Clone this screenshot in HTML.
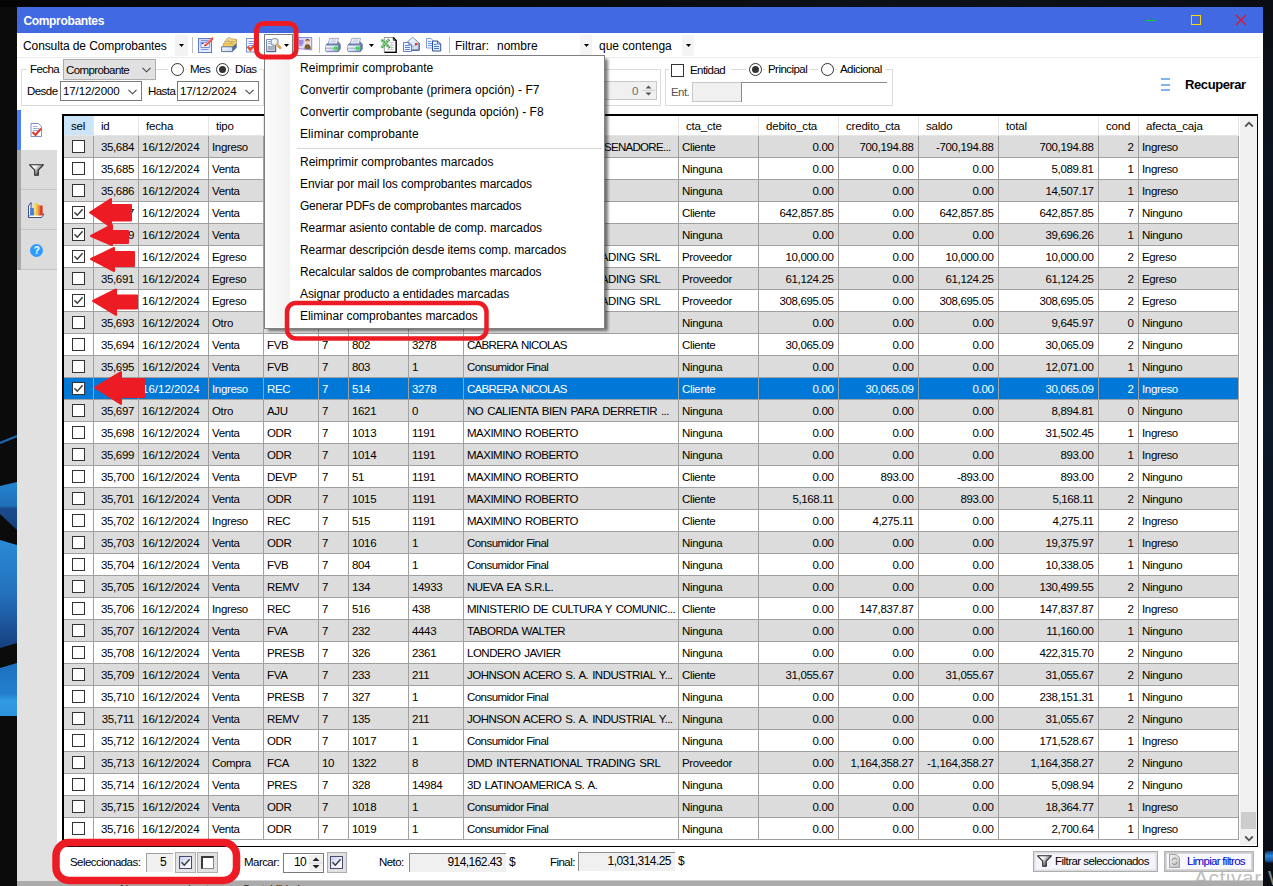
<!DOCTYPE html>
<html lang="es"><head><meta charset="utf-8"><title>Comprobantes</title>
<style>
*{box-sizing:border-box;margin:0;padding:0}
html,body{width:1273px;height:886px;overflow:hidden;background:#0b0b0c}
body{position:relative;font-family:"Liberation Sans",sans-serif;font-size:11.5px;letter-spacing:-.35px;color:#000}
.abs,.abs>*{position:absolute}
.a{position:absolute}
.t{position:absolute;white-space:nowrap;line-height:14px;height:14px;letter-spacing:-.55px}
.ui{font-family:"Liberation Sans",sans-serif;font-size:12px;white-space:nowrap;letter-spacing:0}
/* grid */
#grid{position:absolute;left:62px;top:114px;width:1196px;height:733px;background:#fff;border:solid #000;border-width:2px 1px 1px 2px}
.hc{position:absolute;top:116px;height:20px;background:#fff;border-right:1px solid #e5e5e5;border-bottom:1px solid #e5e5e5;line-height:21px;padding-left:7px;white-space:nowrap;overflow:hidden}
.r{position:absolute;left:64px;width:1175px;height:22px}
.r.g{background:#dcdcdc}
.r.s{background:#0078d7;color:#fff}
.c{position:absolute;top:0;height:22px;border-right:1px solid #a0a0a0;border-bottom:1px solid #a0a0a0;line-height:22px;padding:0 3px 0 3px;white-space:nowrap;overflow:hidden}
.c.r_{text-align:right;padding-right:4.500px}
.c.f{letter-spacing:0}
.c.id{padding-right:4px}
.c.u{letter-spacing:-.5px;word-spacing:1.2px}
.c.cf{letter-spacing:-.55px}
.c.u1{letter-spacing:-.36px;word-spacing:1.200px}
.c.u2{letter-spacing:-.68px;word-spacing:1.200px}
.hc{letter-spacing:-.2px}
.cb{position:absolute;left:8px;top:4px;width:13px;height:13px;border:1px solid #333;background:#fff}
.cb svg{position:absolute;left:0;top:0}
</style></head><body>

<div class="a" style="left:1263px;top:0;width:10px;height:886px;background:linear-gradient(180deg,#0b0d12 0%,#0c1420 18%,#0a0f18 30%,#0e1a2a 45%,#0a1422 60%,#0b1220 80%,#0a0c12 100%)"></div>
<div class="a" style="left:1265px;top:851px;width:8px;height:12px;background:linear-gradient(180deg,#143a6a,#2b86d6 40%,#1c5aa0 80%,#0c1830);border-radius:3px 0 0 3px"></div>
<div class="a" style="left:0;top:0;width:1273px;height:7px;background:linear-gradient(90deg,#050506 0%,#08090c 40%,#0c1018 70%,#0a0d14 100%)"></div>
<svg class="a" style="left:0;top:0" width="17" height="886" viewBox="0 0 17 886"><defs><linearGradient id="wl1" x1="0" y1="0" x2="0" y2="1"><stop offset="0" stop-color="#2485cf"/><stop offset=".5" stop-color="#1f6fb8"/><stop offset=".55" stop-color="#1b4b8c"/><stop offset="1" stop-color="#17407c"/></linearGradient><linearGradient id="wl2" x1="0" y1="0" x2="0" y2="1"><stop offset="0" stop-color="#2a8bd3"/><stop offset=".5" stop-color="#2371bd"/><stop offset="1" stop-color="#173f7f"/></linearGradient><linearGradient id="wl3" x1="0" y1="0" x2="0" y2="1"><stop offset="0" stop-color="#1d6fbd"/><stop offset=".6" stop-color="#2481cf"/><stop offset=".7" stop-color="#319be2"/><stop offset="1" stop-color="#2c92dc"/></linearGradient></defs><path d="M0 443 L17 436" stroke="#1c66ad" stroke-width="2.200"/><path d="M0 486 L17 482 V530 L0 514 Z" fill="url(#wl1)"/><path d="M0 540 L17 545 V643 L0 648 Z" fill="url(#wl2)"/><path d="M0 668 L17 663 V716 H0 Z" fill="url(#wl3)"/></svg>
<div class="a" style="left:17px;top:7px;width:1246px;height:874px;background:#fff"></div>
<div class="a" style="left:17px;top:880px;width:1246px;height:6px;background:#ababab;border-top:1px solid #cfcfcf"></div>
<div class="t" style="left:120px;top:882px;color:#222">Nuevo comprobante</div>
<div class="t" style="left:242px;top:882px;color:#222">Contabilidad</div>
<div class="a" style="left:17px;top:7px;width:1246px;height:26px;background:#4169e1"></div>
<div class="t" style="left:23.500px;top:14px;color:#fff;font-weight:bold;font-size:12px;letter-spacing:-.35px">Comprobantes</div>
<div class="a" style="left:1146px;top:20px;width:10px;height:1px;background:#00e000"></div>
<div class="a" style="left:1191px;top:15px;width:10px;height:10px;border:1px solid #ffd700"></div>
<svg class="a" style="left:1235px;top:14px" width="12" height="12" viewBox="0 0 12 12"><path d="M1 1 L11 11 M11 1 L1 11" stroke="#e8121c" stroke-width="1.2" fill="none"/></svg>
<div class="a" style="left:17px;top:57px;width:1244px;height:1px;background:#ececec"></div>
<div class="t ui" style="left:23px;top:39px;letter-spacing:-.1px">Consulta de Comprobantes</div>
<div class="a" style="left:175px;top:35px;width:13px;height:21px;background:#f3f3f3"></div>
<svg class="a" style="left:179px;top:44px" width="5" height="3" viewBox="0 0 5 3"><path d="M0 0 H5 L2.5 3 Z" fill="#000"/></svg>
<div class="a" style="left:192px;top:37px;width:1px;height:16px;background:#bdbdbd"></div>
<div class="a" style="left:319px;top:37px;width:1px;height:16px;background:#bdbdbd"></div>
<div class="a" style="left:449px;top:37px;width:1px;height:16px;background:#bdbdbd"></div>
<svg class="a" style="left:198px;top:37px" width="16" height="16" viewBox="0 0 16 16"><defs><linearGradient id="i1a" x1="0" y1="0" x2="0" y2="1"><stop offset="0" stop-color="#c9d8fb"/><stop offset="1" stop-color="#e8efff"/></linearGradient></defs><rect x="0.500" y="1.500" width="13" height="14" fill="url(#i1a)" stroke="#5f7dcb" stroke-width="1"/><path d="M3 3.500h7.500M3 12.500h7.500" stroke="#7a98de" stroke-width="1"/><rect x="3" y="5.300" width="8.300" height="5.200" fill="#fff" stroke="#6c8ada" stroke-width=".9"/><rect x="3.600" y="6" width="2" height="1.100" fill="#1a2cf0"/><path d="M6.200 9.300 L7 7.300 L13.300 0.800 L15.200 2.600 L8.600 8.800 Z" fill="#f0463c"/><path d="M7.600 7.600 L13.600 1.500" stroke="#ff9d92" stroke-width="1"/><path d="M13.300 0.800 L15.200 0.300 L15.200 2.600 Z" fill="#e23a18"/><path d="M6 9.600 L7 7.400 L8.400 8.800 Z" fill="#a61e16"/></svg>
<svg class="a" style="left:221px;top:37px" width="16" height="16" viewBox="0 0 16 16"><defs><linearGradient id="i2a" x1="0" y1="0" x2="1" y2="1"><stop offset="0" stop-color="#ffffff"/><stop offset="1" stop-color="#bcd3ee"/></linearGradient><linearGradient id="i2b" x1="0" y1="0" x2="0" y2="1"><stop offset="0" stop-color="#fbeea8"/><stop offset="1" stop-color="#f0c040"/></linearGradient></defs><path d="M2 9.600 L2.300 7 L6.200 1.300 L8.600 0.500 L10.200 1.800 L15.300 2.300 L15.700 6.300 L11.600 9.800 Z" fill="url(#i2b)" stroke="#a8895a" stroke-width=".7"/><path d="M2.300 7 H11.500 L15.300 2.800 M4.200 4.400 H12.700 M6.700 4.400 L8.800 1.800 M9 7 L11.400 4.400" stroke="#b79a62" stroke-width=".7" fill="none"/><path d="M2.600 7.400 H11.300 V9.600 H2.600 Z" fill="#f6cf58"/><path d="M11.600 9.800 L15.700 6.300 V10.700 L11.600 14.600 Z" fill="#4b6a8f"/><path d="M0.600 9.800 H11.600 V14.600 H0.600 Z" fill="url(#i2a)" stroke="#4d6a92" stroke-width=".9"/></svg>
<svg class="a" style="left:246px;top:37px" width="16" height="16" viewBox="0 0 16 16"><rect x="0.500" y="1.500" width="10.500" height="13.500" fill="#f4f8ff" stroke="#6f86c8" stroke-width=".9"/><path d="M2.500 4.500h6.500M2.500 6.500h6.500M2.500 8.500h6.500M2.500 10.500h6.500" stroke="#7da0ea" stroke-width="1"/><path d="M1.500 9.500 L4.300 13 L10.500 5.500" stroke="#e8502a" stroke-width="2.300" fill="none"/></svg>
<svg class="a" style="left:298px;top:36px" width="16" height="16" viewBox="0 0 16 16"><defs><linearGradient id="i5a" x1="0" y1="0" x2="1" y2="1"><stop offset="0" stop-color="#c9c9ff"/><stop offset="1" stop-color="#f2f2ff"/></linearGradient></defs><path d="M0 1.500 H13.700 V14 L0 12.500 Z" fill="url(#i5a)" stroke="#7f7fdc" stroke-width=".9"/><path d="M1 5h4.500M1 7h4.500M1.500 9h3" stroke="#5a48c0" stroke-width="1.100"/><path d="M6.500 12.800 Q6.300 8.300 9.500 8 Q12.800 8.300 12.700 13.300 Z" fill="#7a5a1e"/><circle cx="9.600" cy="5.500" r="2.300" fill="#f3c79a"/><path d="M7.300 5 Q7.600 2.600 9.800 2.800 Q12 3 11.900 5 Q10 3.800 7.300 5 Z" fill="#8a5a28"/><path d="M9.300 8.300 L9.900 8.300 L10.200 11.500 L9.500 12.300 L9 11.500 Z" fill="#2f7ad8"/></svg>
<svg class="a" style="left:324.5px;top:37px" width="16" height="16" viewBox="0 0 16 16"><defs><linearGradient id="p1" x1="0" y1="0" x2="1" y2="1"><stop offset="0" stop-color="#f6f9ff"/><stop offset=".55" stop-color="#d7e0f0"/><stop offset="1" stop-color="#8a9cc0"/></linearGradient></defs><path d="M1 8 L4 5 H13.500 L15.300 7.500 V12 L13.300 14.700 H1.500 L0.600 13.500 Z" fill="#6d82aa" stroke="#52668f" stroke-width=".7"/><path d="M4.800 1.300 L13.600 1.300 L12 6.700 L3.200 6.700 Z" fill="#f4f6ff" stroke="#8b97bd" stroke-width=".8"/><path d="M6 3h5.500M5.500 4.800h5.500" stroke="#b3bcd6" stroke-width=".9"/><path d="M0.800 8.600 H12.800 V14.300 H1.500 L0.800 13.300 Z" fill="url(#p1)"/><path d="M0.800 11.200 H12.800" stroke="#8fa0c4" stroke-width=".8"/><rect x="9" y="9.700" width="3.200" height="2.800" fill="#18cf2c"/><rect x="10" y="10.500" width="1.200" height="1.100" fill="#a6ff4a"/></svg>
<svg class="a" style="left:346.5px;top:37px" width="16" height="16" viewBox="0 0 16 16"><defs><linearGradient id="p2" x1="0" y1="0" x2="1" y2="1"><stop offset="0" stop-color="#f6f9ff"/><stop offset=".55" stop-color="#d7e0f0"/><stop offset="1" stop-color="#8a9cc0"/></linearGradient></defs><path d="M1 8 L4 5 H13.500 L15.300 7.500 V12 L13.300 14.700 H1.500 L0.600 13.500 Z" fill="#6d82aa" stroke="#52668f" stroke-width=".7"/><path d="M4.800 1.300 L13.600 1.300 L12 6.700 L3.200 6.700 Z" fill="#f4f6ff" stroke="#8b97bd" stroke-width=".8"/><path d="M6 3h5.500M5.500 4.800h5.500" stroke="#b3bcd6" stroke-width=".9"/><path d="M0.800 8.600 H12.800 V14.300 H1.500 L0.800 13.300 Z" fill="url(#p2)"/><path d="M0.800 11.200 H12.800" stroke="#8fa0c4" stroke-width=".8"/><rect x="9" y="9.700" width="3.200" height="2.800" fill="#18cf2c"/><rect x="10" y="10.500" width="1.200" height="1.100" fill="#a6ff4a"/></svg>
<svg class="a" style="left:369px;top:44px" width="5" height="3" viewBox="0 0 5 3"><path d="M0 0 H5 L2.500 3 Z" fill="#000"/></svg>
<svg class="a" style="left:379.5px;top:36px" width="17" height="17" viewBox="0 0 17 17"><defs><pattern id="xd" width="1.400" height="1.400" patternUnits="userSpaceOnUse"><rect width="1.400" height="1.400" fill="#0f8a14"/><rect width=".7" height=".7" fill="#d9f0d9"/><rect x=".7" y=".7" width=".7" height=".7" fill="#d9f0d9"/></pattern></defs><path d="M4.300 1.500 H13.300 L16 4.200 V16 H4.300 Z" fill="#fff" stroke="#8c8c8c" stroke-width=".9"/><path d="M13.300 1.500 L16.200 4.400 V16.300 H4.500" fill="none" stroke="#000" stroke-width="1.300"/><path d="M13.300 1.500 V4.300 H16" fill="none" stroke="#000" stroke-width=".8"/><path d="M9.500 6.500h4.500M9.500 9h4.500M9.500 11.500h4.500M11.800 6v8M7 13.500h7" stroke="#c4c4c4" stroke-width=".8"/><path d="M1.300 3.600 L9.800 12 M9.300 3.300 L1.300 11.700" stroke="url(#xd)" stroke-width="2.900"/></svg>
<svg class="a" style="left:403px;top:36px" width="17" height="17" viewBox="0 0 17 17"><defs><linearGradient id="m1" x1="0" y1="0" x2="1" y2="1"><stop offset="0" stop-color="#ffffff"/><stop offset="1" stop-color="#c4d4ee"/></linearGradient></defs><path d="M3.300 7 L9.700 1.200 L16 7 V14 H3.300 Z" fill="url(#m1)" stroke="#6f84ae" stroke-width=".9"/><path d="M3.300 7 L9.700 11 L16 7" fill="none" stroke="#8c9cc0" stroke-width=".7"/><path d="M16.200 7 V14.300 H8" stroke="#3f5686" stroke-width="1" fill="none"/><rect x="12" y="7" width="2.300" height="2.200" fill="#e5361e"/><path d="M0.500 6.500 H6 L8.500 9 V15.500 H0.500 Z" fill="#eef3ff" stroke="#5673b8" stroke-width=".9"/><path d="M6 6.500 V9 H8.500" fill="none" stroke="#3b5390" stroke-width=".8"/><path d="M2 9.500h4M2 11.500h5M2 13.500h5" stroke="#5b82d6" stroke-width="1"/></svg>
<svg class="a" style="left:426px;top:37px" width="16" height="16" viewBox="0 0 16 16"><path d="M0.500 1.500 H5 L7.500 4 V11 H0.500 Z" fill="#f0f5ff" stroke="#7d93c8" stroke-width=".9"/><path d="M2 4.500h3M2 6.500h4M2 8.500h4" stroke="#6d97e6" stroke-width="1"/><path d="M6.500 4 H11.500 L14.700 7 V14 H6.500 Z" fill="#eaf1ff" stroke="#2f4f9e" stroke-width="1"/><path d="M11.500 4 V7 H14.700" fill="none" stroke="#2f4f9e" stroke-width=".8"/><path d="M8 7.500h2.500M8 9.500h5M8 11.500h5" stroke="#3f74d8" stroke-width="1"/></svg>
<div class="t ui" style="left:455px;top:39px">Filtrar:</div>
<div class="t ui" style="left:497px;top:39px">nombre</div>
<div class="a" style="left:580px;top:35px;width:12px;height:21px;background:#f4f4f4"></div>
<svg class="a" style="left:584px;top:44px" width="5" height="3" viewBox="0 0 5 3"><path d="M0 0 H5 L2.5 3 Z" fill="#000"/></svg>
<div class="t ui" style="left:599px;top:39px">que contenga</div>
<div class="a" style="left:682px;top:35px;width:12px;height:21px;background:#f4f4f4"></div>
<svg class="a" style="left:686px;top:44px" width="5" height="3" viewBox="0 0 5 3"><path d="M0 0 H5 L2.5 3 Z" fill="#000"/></svg>
<div class="a" style="left:21px;top:69px;width:243px;height:37px;border:1px solid #dcdcdc"></div>
<div class="t" style="left:27px;top:62px;background:#fff;padding:0 3px">Fecha</div>
<div class="a" style="left:63px;top:59px;width:93px;height:21px;background:#e1e1e1;border:1px solid #adadad"></div>
<div class="t" style="left:66px;top:63px;letter-spacing:-.6px">Comprobante</div>
<svg class="a" style="left:142px;top:67px" width="9" height="6" viewBox="0 0 9 6"><path d="M0.5 0.8 L4.5 4.8 L8.5 0.8" stroke="#444" stroke-width="1.1" fill="none"/></svg>
<div class="a" style="left:168px;top:62px;width:17px;height:14px;background:#fff"></div>
<div class="a" style="left:171px;top:63px;width:13px;height:13px;border:1px solid #333;border-radius:50%;background:#fff"></div>
<div class="t" style="left:187px;top:62px;background:#fff;padding:0 3px">Mes</div>
<div class="a" style="left:213px;top:62px;width:17px;height:14px;background:#fff"></div>
<div class="a" style="left:216px;top:63px;width:13px;height:13px;border:1px solid #333;border-radius:50%;background:#fff"></div>
<div class="a" style="left:219px;top:66px;width:7px;height:7px;border-radius:50%;background:#333"></div>
<div class="t" style="left:232px;top:62px;background:#fff;padding:0 3px">Días</div>
<div class="t" style="left:27px;top:84px">Desde</div>
<div class="a" style="left:60px;top:81px;width:82px;height:20px;background:#fff;border:1px solid #7a7a7a"></div>
<div class="t" style="left:63px;top:84px;letter-spacing:-.1px">17/12/2000</div>
<svg class="a" style="left:128px;top:89px" width="9" height="6" viewBox="0 0 9 6"><path d="M0.5 0.8 L4.5 4.8 L8.5 0.8" stroke="#444" stroke-width="1.1" fill="none"/></svg>
<div class="t" style="left:148px;top:84px">Hasta</div>
<div class="a" style="left:177px;top:81px;width:82px;height:20px;background:#fff;border:1px solid #7a7a7a"></div>
<div class="t" style="left:180px;top:84px;letter-spacing:-.1px">17/12/2024</div>
<svg class="a" style="left:245px;top:89px" width="9" height="6" viewBox="0 0 9 6"><path d="M0.5 0.8 L4.5 4.8 L8.5 0.8" stroke="#444" stroke-width="1.1" fill="none"/></svg>
<div class="a" style="left:270px;top:69px;width:391px;height:37px;border:1px solid #dcdcdc"></div>
<div class="a" style="left:560px;top:81px;width:97px;height:19px;background:#f0f0f0;border:1px solid #c8c8c8"></div>
<div class="t" style="left:632px;top:84px;color:#6d6d6d">0</div>
<svg class="a" style="left:642px;top:83px" width="13" height="15" viewBox="0 0 13 15"><rect x="0" y="0" width="13" height="15" fill="#f0f0f0"/><path d="M3.5 5.5 L6.5 2.5 L9.5 5.5 Z M3.5 9.5 L6.5 12.5 L9.5 9.5 Z" fill="#555"/><path d="M0 7.5H13" stroke="#d0d0d0"/></svg>
<div class="a" style="left:665px;top:69px;width:228px;height:37px;border:1px solid #dcdcdc"></div>
<div class="a" style="left:669px;top:62px;width:62px;height:16px;background:#fff"></div>
<div class="a" style="left:671px;top:64px;width:13px;height:13px;border:1px solid #333;background:#fff"></div>
<div class="t" style="left:690px;top:63px">Entidad</div>
<div class="a" style="left:746px;top:62px;width:17px;height:14px;background:#fff"></div>
<div class="a" style="left:749px;top:63px;width:13px;height:13px;border:1px solid #333;border-radius:50%;background:#fff"></div>
<div class="a" style="left:752px;top:66px;width:7px;height:7px;border-radius:50%;background:#333"></div>
<div class="t" style="left:765px;top:62px;background:#fff;padding:0 3px">Principal</div>
<div class="a" style="left:818px;top:62px;width:17px;height:14px;background:#fff"></div>
<div class="a" style="left:821px;top:63px;width:13px;height:13px;border:1px solid #333;border-radius:50%;background:#fff"></div>
<div class="t" style="left:837px;top:62px;background:#fff;padding:0 3px">Adicional</div>
<div class="t" style="left:671px;top:85px;color:#555">Ent.</div>
<div class="a" style="left:692px;top:82px;width:50px;height:20px;background:#f0f0f0;border:1px solid #c6c6c6"></div>
<div class="a" style="left:741px;top:82px;width:146px;height:20px;border-top:1px solid #8a8a8a;border-left:1px solid #8a8a8a"></div>
<div class="a" style="left:1161px;top:78px;width:9px;height:2px;background:#7fb4f2"></div>
<div class="a" style="left:1161px;top:84px;width:9px;height:2px;background:#7fb4f2"></div>
<div class="a" style="left:1161px;top:89px;width:9px;height:2px;background:#7fb4f2"></div>
<div class="t" style="left:1185px;top:77px;font-weight:bold;font-size:13px;line-height:16px;height:16px;letter-spacing:-.4px">Recuperar</div>
<div class="a" style="left:17px;top:110px;width:40px;height:771px;background:#e1e1e1"></div>
<div class="a" style="left:17px;top:110px;width:40px;height:40px;background:#fff"></div>
<div class="a" style="left:17px;top:110px;width:4px;height:40px;background:#4a80fb"></div>
<div class="a" style="left:17px;top:150px;width:40px;height:120px;background:#dcdcdc"></div>
<div class="a" style="left:17px;top:150px;width:4px;height:120px;background:#a9a9a9"></div>
<div class="a" style="left:21px;top:189px;width:36px;height:1px;background:#c4c4c4"></div>
<div class="a" style="left:21px;top:229px;width:36px;height:1px;background:#c4c4c4"></div>
<div class="a" style="left:21px;top:269px;width:36px;height:1px;background:#c4c4c4"></div>
<svg class="a" style="left:30px;top:122px" width="13" height="16" viewBox="0 0 13 16"><path d="M1 1.500 H8.500 L11.500 4.500 V14.500 H1 Z" fill="#fff" stroke="#6f86c8" stroke-width=".9"/><path d="M3 4.500h4.500M3 6.500h6M3 8.500h6" stroke="#8fa6e0" stroke-width=".9"/><path d="M2.500 10 L5.500 13 L11 6.500" stroke="#e03a2a" stroke-width="2" fill="none"/></svg>
<svg class="a" style="left:29px;top:164px" width="15" height="12" viewBox="0 0 15 12"><defs><linearGradient id="fs" x1="0" y1="0" x2="1" y2=".6"><stop offset="0" stop-color="#fff"/><stop offset=".42" stop-color="#f4f4f4"/><stop offset=".7" stop-color="#8a8a8a"/><stop offset="1" stop-color="#222"/></linearGradient></defs><path d="M0.600 0.800 H14.400 L9.300 6.200 V11.300 H5.700 V6.200 Z" fill="url(#fs)" stroke="#2a2a2a" stroke-width="1.100" stroke-linejoin="round"/></svg>
<svg class="a" style="left:27px;top:201px" width="18" height="18" viewBox="0 0 18 18"><path d="M1.500 5 L4 1.500 V13 L1.500 16.500 Z" fill="#fff" stroke="#2e3a80" stroke-width=".9"/><path d="M1.500 16.500 H14.500 L17 13 H4" fill="#fff" stroke="#2e3a80" stroke-width=".9"/><rect x="3.200" y="7" width="3.600" height="7.500" fill="#3f7fe6"/><rect x="7.500" y="2.500" width="4" height="12" fill="#f0c228"/><rect x="11.500" y="4.500" width="4.200" height="10" fill="#d8442a"/><rect x="7.500" y="2.500" width="1.300" height="12" fill="#f8e48a"/><rect x="11.500" y="4.500" width="1.200" height="10" fill="#ee8a6a"/></svg>
<div class="a" style="left:30px;top:244px;width:13px;height:13px;border-radius:50%;background:#2e9bff"></div>
<div class="t" style="left:30px;top:244px;width:13px;text-align:center;color:#fff;font-weight:bold;font-size:10px;line-height:13px;height:13px">?</div>
<div id="grid"></div>
<div class="hc" style="left:64px;width:30px;background:#cce4f7;">sel</div>
<div class="hc" style="left:94px;width:45px;">id</div>
<div class="hc" style="left:139px;width:70px;">fecha</div>
<div class="hc" style="left:209px;width:55px;">tipo</div>
<div class="hc" style="left:264px;width:55px;">tipo_comp</div>
<div class="hc" style="left:319px;width:30px;">pv</div>
<div class="hc" style="left:349px;width:60px;">numero</div>
<div class="hc" style="left:409px;width:55px;">entidad</div>
<div class="hc" style="left:464px;width:215px;">nombre</div>
<div class="hc" style="left:679px;width:80px;">cta_cte</div>
<div class="hc" style="left:759px;width:80px;">debito_cta</div>
<div class="hc" style="left:839px;width:80px;">credito_cta</div>
<div class="hc" style="left:919px;width:80px;">saldo</div>
<div class="hc" style="left:999px;width:100px;">total</div>
<div class="hc" style="left:1099px;width:40px;">cond</div>
<div class="hc" style="left:1139px;width:100px;">afecta_caja</div>
<div class="a" style="left:1240px;top:116px;width:17px;height:729px;background:#f0f0f0"></div>
<svg class="a" style="left:1243.500px;top:121px" width="10" height="7" viewBox="0 0 10 7"><path d="M1.200 5.500 L5 1.700 L8.800 5.500" stroke="#505050" stroke-width="1.800" fill="none"/></svg>
<svg class="a" style="left:1243.500px;top:834.500px" width="10" height="7" viewBox="0 0 10 7"><path d="M1.200 1.500 L5 5.300 L8.800 1.500" stroke="#505050" stroke-width="1.800" fill="none"/></svg>
<div class="a" style="left:1241px;top:812px;width:15px;height:17px;background:#cdcdcd"></div>
<div class="r g" style="top:136px">
<div class="c" style="left:0px;width:30px"><div class="cb"></div></div>
<div class="c r_ id" style="left:30px;width:45px">35,684</div>
<div class="c f" style="left:75px;width:70px">16/12/2024</div>
<div class="c" style="left:145px;width:55px">Ingreso</div>
<div class="c" style="left:200px;width:55px">REC</div>
<div class="c" style="left:255px;width:30px">7</div>
<div class="c" style="left:285px;width:60px">513</div>
<div class="c" style="left:345px;width:55px">2290</div>
<div class="c u" style="left:400px;width:215px"></div>
<div class="c" style="left:615px;width:80px">Cliente</div>
<div class="c r_" style="left:695px;width:80px">0.00</div>
<div class="c r_" style="left:775px;width:80px">700,194.88</div>
<div class="c r_" style="left:855px;width:80px">-700,194.88</div>
<div class="c r_" style="left:935px;width:100px">700,194.88</div>
<div class="c r_" style="left:1035px;width:40px">2</div>
<div class="c" style="left:1075px;width:100px">Ingreso</div>
</div>
<div class="r" style="top:158px">
<div class="c" style="left:0px;width:30px"><div class="cb"></div></div>
<div class="c r_ id" style="left:30px;width:45px">35,685</div>
<div class="c f" style="left:75px;width:70px">16/12/2024</div>
<div class="c" style="left:145px;width:55px">Venta</div>
<div class="c" style="left:200px;width:55px">FVB</div>
<div class="c" style="left:255px;width:30px">7</div>
<div class="c" style="left:285px;width:60px">800</div>
<div class="c" style="left:345px;width:55px">1</div>
<div class="c cf" style="left:400px;width:215px">Consumidor Final</div>
<div class="c" style="left:615px;width:80px">Ninguna</div>
<div class="c r_" style="left:695px;width:80px">0.00</div>
<div class="c r_" style="left:775px;width:80px">0.00</div>
<div class="c r_" style="left:855px;width:80px">0.00</div>
<div class="c r_" style="left:935px;width:100px">5,089.81</div>
<div class="c r_" style="left:1035px;width:40px">1</div>
<div class="c" style="left:1075px;width:100px">Ingreso</div>
</div>
<div class="r g" style="top:180px">
<div class="c" style="left:0px;width:30px"><div class="cb"></div></div>
<div class="c r_ id" style="left:30px;width:45px">35,686</div>
<div class="c f" style="left:75px;width:70px">16/12/2024</div>
<div class="c" style="left:145px;width:55px">Venta</div>
<div class="c" style="left:200px;width:55px">FVB</div>
<div class="c" style="left:255px;width:30px">7</div>
<div class="c" style="left:285px;width:60px">801</div>
<div class="c" style="left:345px;width:55px">1</div>
<div class="c cf" style="left:400px;width:215px">Consumidor Final</div>
<div class="c" style="left:615px;width:80px">Ninguna</div>
<div class="c r_" style="left:695px;width:80px">0.00</div>
<div class="c r_" style="left:775px;width:80px">0.00</div>
<div class="c r_" style="left:855px;width:80px">0.00</div>
<div class="c r_" style="left:935px;width:100px">14,507.17</div>
<div class="c r_" style="left:1035px;width:40px">1</div>
<div class="c" style="left:1075px;width:100px">Ingreso</div>
</div>
<div class="r" style="top:202px">
<div class="c" style="left:0px;width:30px"><div class="cb"><svg width="11" height="11" viewBox="0 0 11 11"><path d="M1.500 5.300 L4.300 8.300 L9.600 2.200" stroke="#3a3a3a" stroke-width="1.400" fill="none"/></svg></div></div>
<div class="c r_ id" style="left:30px;width:45px">35,687</div>
<div class="c f" style="left:75px;width:70px">16/12/2024</div>
<div class="c" style="left:145px;width:55px">Venta</div>
<div class="c" style="left:200px;width:55px">FVA</div>
<div class="c" style="left:255px;width:30px">7</div>
<div class="c" style="left:285px;width:60px">231</div>
<div class="c" style="left:345px;width:55px">3012</div>
<div class="c u" style="left:400px;width:215px"></div>
<div class="c" style="left:615px;width:80px">Cliente</div>
<div class="c r_" style="left:695px;width:80px">642,857.85</div>
<div class="c r_" style="left:775px;width:80px">0.00</div>
<div class="c r_" style="left:855px;width:80px">642,857.85</div>
<div class="c r_" style="left:935px;width:100px">642,857.85</div>
<div class="c r_" style="left:1035px;width:40px">7</div>
<div class="c" style="left:1075px;width:100px">Ninguno</div>
</div>
<div class="r g" style="top:224px">
<div class="c" style="left:0px;width:30px"><div class="cb"><svg width="11" height="11" viewBox="0 0 11 11"><path d="M1.500 5.300 L4.300 8.300 L9.600 2.200" stroke="#3a3a3a" stroke-width="1.400" fill="none"/></svg></div></div>
<div class="c r_ id" style="left:30px;width:45px">35,689</div>
<div class="c f" style="left:75px;width:70px">16/12/2024</div>
<div class="c" style="left:145px;width:55px">Venta</div>
<div class="c" style="left:200px;width:55px">ODR</div>
<div class="c" style="left:255px;width:30px">7</div>
<div class="c" style="left:285px;width:60px">1012</div>
<div class="c" style="left:345px;width:55px">1</div>
<div class="c cf" style="left:400px;width:215px">Consumidor Final</div>
<div class="c" style="left:615px;width:80px">Ninguna</div>
<div class="c r_" style="left:695px;width:80px">0.00</div>
<div class="c r_" style="left:775px;width:80px">0.00</div>
<div class="c r_" style="left:855px;width:80px">0.00</div>
<div class="c r_" style="left:935px;width:100px">39,696.26</div>
<div class="c r_" style="left:1035px;width:40px">1</div>
<div class="c" style="left:1075px;width:100px">Ninguno</div>
</div>
<div class="r" style="top:246px">
<div class="c" style="left:0px;width:30px"><div class="cb"><svg width="11" height="11" viewBox="0 0 11 11"><path d="M1.500 5.300 L4.300 8.300 L9.600 2.200" stroke="#3a3a3a" stroke-width="1.400" fill="none"/></svg></div></div>
<div class="c r_ id" style="left:30px;width:45px">35,690</div>
<div class="c f" style="left:75px;width:70px">16/12/2024</div>
<div class="c" style="left:145px;width:55px">Egreso</div>
<div class="c" style="left:200px;width:55px">OP</div>
<div class="c" style="left:255px;width:30px">7</div>
<div class="c" style="left:285px;width:60px">210</div>
<div class="c" style="left:345px;width:55px">8</div>
<div class="c u1" style="left:400px;width:215px">DMD INTERNATIONAL TRADING SRL</div>
<div class="c" style="left:615px;width:80px">Proveedor</div>
<div class="c r_" style="left:695px;width:80px">10,000.00</div>
<div class="c r_" style="left:775px;width:80px">0.00</div>
<div class="c r_" style="left:855px;width:80px">10,000.00</div>
<div class="c r_" style="left:935px;width:100px">10,000.00</div>
<div class="c r_" style="left:1035px;width:40px">2</div>
<div class="c" style="left:1075px;width:100px">Egreso</div>
</div>
<div class="r g" style="top:268px">
<div class="c" style="left:0px;width:30px"><div class="cb"></div></div>
<div class="c r_ id" style="left:30px;width:45px">35,691</div>
<div class="c f" style="left:75px;width:70px">16/12/2024</div>
<div class="c" style="left:145px;width:55px">Egreso</div>
<div class="c" style="left:200px;width:55px">OP</div>
<div class="c" style="left:255px;width:30px">7</div>
<div class="c" style="left:285px;width:60px">211</div>
<div class="c" style="left:345px;width:55px">8</div>
<div class="c u1" style="left:400px;width:215px">DMD INTERNATIONAL TRADING SRL</div>
<div class="c" style="left:615px;width:80px">Proveedor</div>
<div class="c r_" style="left:695px;width:80px">61,124.25</div>
<div class="c r_" style="left:775px;width:80px">0.00</div>
<div class="c r_" style="left:855px;width:80px">61,124.25</div>
<div class="c r_" style="left:935px;width:100px">61,124.25</div>
<div class="c r_" style="left:1035px;width:40px">2</div>
<div class="c" style="left:1075px;width:100px">Egreso</div>
</div>
<div class="r" style="top:290px">
<div class="c" style="left:0px;width:30px"><div class="cb"><svg width="11" height="11" viewBox="0 0 11 11"><path d="M1.500 5.300 L4.300 8.300 L9.600 2.200" stroke="#3a3a3a" stroke-width="1.400" fill="none"/></svg></div></div>
<div class="c r_ id" style="left:30px;width:45px">35,692</div>
<div class="c f" style="left:75px;width:70px">16/12/2024</div>
<div class="c" style="left:145px;width:55px">Egreso</div>
<div class="c" style="left:200px;width:55px">OP</div>
<div class="c" style="left:255px;width:30px">7</div>
<div class="c" style="left:285px;width:60px">212</div>
<div class="c" style="left:345px;width:55px">8</div>
<div class="c u1" style="left:400px;width:215px">DMD INTERNATIONAL TRADING SRL</div>
<div class="c" style="left:615px;width:80px">Proveedor</div>
<div class="c r_" style="left:695px;width:80px">308,695.05</div>
<div class="c r_" style="left:775px;width:80px">0.00</div>
<div class="c r_" style="left:855px;width:80px">308,695.05</div>
<div class="c r_" style="left:935px;width:100px">308,695.05</div>
<div class="c r_" style="left:1035px;width:40px">2</div>
<div class="c" style="left:1075px;width:100px">Egreso</div>
</div>
<div class="r g" style="top:312px">
<div class="c" style="left:0px;width:30px"><div class="cb"></div></div>
<div class="c r_ id" style="left:30px;width:45px">35,693</div>
<div class="c f" style="left:75px;width:70px">16/12/2024</div>
<div class="c" style="left:145px;width:55px">Otro</div>
<div class="c" style="left:200px;width:55px">AJU</div>
<div class="c" style="left:255px;width:30px">7</div>
<div class="c" style="left:285px;width:60px">1620</div>
<div class="c" style="left:345px;width:55px">0</div>
<div class="c u" style="left:400px;width:215px"></div>
<div class="c" style="left:615px;width:80px">Ninguna</div>
<div class="c r_" style="left:695px;width:80px">0.00</div>
<div class="c r_" style="left:775px;width:80px">0.00</div>
<div class="c r_" style="left:855px;width:80px">0.00</div>
<div class="c r_" style="left:935px;width:100px">9,645.97</div>
<div class="c r_" style="left:1035px;width:40px">0</div>
<div class="c" style="left:1075px;width:100px">Ninguno</div>
</div>
<div class="r" style="top:334px">
<div class="c" style="left:0px;width:30px"><div class="cb"></div></div>
<div class="c r_ id" style="left:30px;width:45px">35,694</div>
<div class="c f" style="left:75px;width:70px">16/12/2024</div>
<div class="c" style="left:145px;width:55px">Venta</div>
<div class="c" style="left:200px;width:55px">FVB</div>
<div class="c" style="left:255px;width:30px">7</div>
<div class="c" style="left:285px;width:60px">802</div>
<div class="c" style="left:345px;width:55px">3278</div>
<div class="c u2" style="left:400px;width:215px">CABRERA NICOLAS</div>
<div class="c" style="left:615px;width:80px">Cliente</div>
<div class="c r_" style="left:695px;width:80px">30,065.09</div>
<div class="c r_" style="left:775px;width:80px">0.00</div>
<div class="c r_" style="left:855px;width:80px">0.00</div>
<div class="c r_" style="left:935px;width:100px">30,065.09</div>
<div class="c r_" style="left:1035px;width:40px">2</div>
<div class="c" style="left:1075px;width:100px">Ninguno</div>
</div>
<div class="r g" style="top:356px">
<div class="c" style="left:0px;width:30px"><div class="cb"></div></div>
<div class="c r_ id" style="left:30px;width:45px">35,695</div>
<div class="c f" style="left:75px;width:70px">16/12/2024</div>
<div class="c" style="left:145px;width:55px">Venta</div>
<div class="c" style="left:200px;width:55px">FVB</div>
<div class="c" style="left:255px;width:30px">7</div>
<div class="c" style="left:285px;width:60px">803</div>
<div class="c" style="left:345px;width:55px">1</div>
<div class="c cf" style="left:400px;width:215px">Consumidor Final</div>
<div class="c" style="left:615px;width:80px">Ninguna</div>
<div class="c r_" style="left:695px;width:80px">0.00</div>
<div class="c r_" style="left:775px;width:80px">0.00</div>
<div class="c r_" style="left:855px;width:80px">0.00</div>
<div class="c r_" style="left:935px;width:100px">12,071.00</div>
<div class="c r_" style="left:1035px;width:40px">1</div>
<div class="c" style="left:1075px;width:100px">Ninguno</div>
</div>
<div class="r s" style="top:378px">
<div class="c" style="left:0px;width:30px"><div class="cb"><svg width="11" height="11" viewBox="0 0 11 11"><path d="M1.500 5.300 L4.300 8.300 L9.600 2.200" stroke="#3a3a3a" stroke-width="1.400" fill="none"/></svg></div></div>
<div class="c r_ id" style="left:30px;width:45px">35,696</div>
<div class="c f" style="left:75px;width:70px">16/12/2024</div>
<div class="c" style="left:145px;width:55px">Ingreso</div>
<div class="c" style="left:200px;width:55px">REC</div>
<div class="c" style="left:255px;width:30px">7</div>
<div class="c" style="left:285px;width:60px">514</div>
<div class="c" style="left:345px;width:55px">3278</div>
<div class="c u2" style="left:400px;width:215px">CABRERA NICOLAS</div>
<div class="c" style="left:615px;width:80px">Cliente</div>
<div class="c r_" style="left:695px;width:80px">0.00</div>
<div class="c r_" style="left:775px;width:80px">30,065.09</div>
<div class="c r_" style="left:855px;width:80px">0.00</div>
<div class="c r_" style="left:935px;width:100px">30,065.09</div>
<div class="c r_" style="left:1035px;width:40px">2</div>
<div class="c" style="left:1075px;width:100px">Ingreso</div>
</div>
<div class="r g" style="top:400px">
<div class="c" style="left:0px;width:30px"><div class="cb"></div></div>
<div class="c r_ id" style="left:30px;width:45px">35,697</div>
<div class="c f" style="left:75px;width:70px">16/12/2024</div>
<div class="c" style="left:145px;width:55px">Otro</div>
<div class="c" style="left:200px;width:55px">AJU</div>
<div class="c" style="left:255px;width:30px">7</div>
<div class="c" style="left:285px;width:60px">1621</div>
<div class="c" style="left:345px;width:55px">0</div>
<div class="c u" style="left:400px;width:215px">NO CALIENTA BIEN PARA DERRETIR ...</div>
<div class="c" style="left:615px;width:80px">Ninguna</div>
<div class="c r_" style="left:695px;width:80px">0.00</div>
<div class="c r_" style="left:775px;width:80px">0.00</div>
<div class="c r_" style="left:855px;width:80px">0.00</div>
<div class="c r_" style="left:935px;width:100px">8,894.81</div>
<div class="c r_" style="left:1035px;width:40px">0</div>
<div class="c" style="left:1075px;width:100px">Ninguno</div>
</div>
<div class="r" style="top:422px">
<div class="c" style="left:0px;width:30px"><div class="cb"></div></div>
<div class="c r_ id" style="left:30px;width:45px">35,698</div>
<div class="c f" style="left:75px;width:70px">16/12/2024</div>
<div class="c" style="left:145px;width:55px">Venta</div>
<div class="c" style="left:200px;width:55px">ODR</div>
<div class="c" style="left:255px;width:30px">7</div>
<div class="c" style="left:285px;width:60px">1013</div>
<div class="c" style="left:345px;width:55px">1191</div>
<div class="c u" style="left:400px;width:215px">MAXIMINO ROBERTO</div>
<div class="c" style="left:615px;width:80px">Ninguna</div>
<div class="c r_" style="left:695px;width:80px">0.00</div>
<div class="c r_" style="left:775px;width:80px">0.00</div>
<div class="c r_" style="left:855px;width:80px">0.00</div>
<div class="c r_" style="left:935px;width:100px">31,502.45</div>
<div class="c r_" style="left:1035px;width:40px">1</div>
<div class="c" style="left:1075px;width:100px">Ingreso</div>
</div>
<div class="r g" style="top:444px">
<div class="c" style="left:0px;width:30px"><div class="cb"></div></div>
<div class="c r_ id" style="left:30px;width:45px">35,699</div>
<div class="c f" style="left:75px;width:70px">16/12/2024</div>
<div class="c" style="left:145px;width:55px">Venta</div>
<div class="c" style="left:200px;width:55px">ODR</div>
<div class="c" style="left:255px;width:30px">7</div>
<div class="c" style="left:285px;width:60px">1014</div>
<div class="c" style="left:345px;width:55px">1191</div>
<div class="c u" style="left:400px;width:215px">MAXIMINO ROBERTO</div>
<div class="c" style="left:615px;width:80px">Ninguna</div>
<div class="c r_" style="left:695px;width:80px">0.00</div>
<div class="c r_" style="left:775px;width:80px">0.00</div>
<div class="c r_" style="left:855px;width:80px">0.00</div>
<div class="c r_" style="left:935px;width:100px">893.00</div>
<div class="c r_" style="left:1035px;width:40px">1</div>
<div class="c" style="left:1075px;width:100px">Ingreso</div>
</div>
<div class="r" style="top:466px">
<div class="c" style="left:0px;width:30px"><div class="cb"></div></div>
<div class="c r_ id" style="left:30px;width:45px">35,700</div>
<div class="c f" style="left:75px;width:70px">16/12/2024</div>
<div class="c" style="left:145px;width:55px">Venta</div>
<div class="c" style="left:200px;width:55px">DEVP</div>
<div class="c" style="left:255px;width:30px">7</div>
<div class="c" style="left:285px;width:60px">51</div>
<div class="c" style="left:345px;width:55px">1191</div>
<div class="c u" style="left:400px;width:215px">MAXIMINO ROBERTO</div>
<div class="c" style="left:615px;width:80px">Cliente</div>
<div class="c r_" style="left:695px;width:80px">0.00</div>
<div class="c r_" style="left:775px;width:80px">893.00</div>
<div class="c r_" style="left:855px;width:80px">-893.00</div>
<div class="c r_" style="left:935px;width:100px">893.00</div>
<div class="c r_" style="left:1035px;width:40px">2</div>
<div class="c" style="left:1075px;width:100px">Ninguno</div>
</div>
<div class="r g" style="top:488px">
<div class="c" style="left:0px;width:30px"><div class="cb"></div></div>
<div class="c r_ id" style="left:30px;width:45px">35,701</div>
<div class="c f" style="left:75px;width:70px">16/12/2024</div>
<div class="c" style="left:145px;width:55px">Venta</div>
<div class="c" style="left:200px;width:55px">ODR</div>
<div class="c" style="left:255px;width:30px">7</div>
<div class="c" style="left:285px;width:60px">1015</div>
<div class="c" style="left:345px;width:55px">1191</div>
<div class="c u" style="left:400px;width:215px">MAXIMINO ROBERTO</div>
<div class="c" style="left:615px;width:80px">Cliente</div>
<div class="c r_" style="left:695px;width:80px">5,168.11</div>
<div class="c r_" style="left:775px;width:80px">0.00</div>
<div class="c r_" style="left:855px;width:80px">893.00</div>
<div class="c r_" style="left:935px;width:100px">5,168.11</div>
<div class="c r_" style="left:1035px;width:40px">2</div>
<div class="c" style="left:1075px;width:100px">Ninguno</div>
</div>
<div class="r" style="top:510px">
<div class="c" style="left:0px;width:30px"><div class="cb"></div></div>
<div class="c r_ id" style="left:30px;width:45px">35,702</div>
<div class="c f" style="left:75px;width:70px">16/12/2024</div>
<div class="c" style="left:145px;width:55px">Ingreso</div>
<div class="c" style="left:200px;width:55px">REC</div>
<div class="c" style="left:255px;width:30px">7</div>
<div class="c" style="left:285px;width:60px">515</div>
<div class="c" style="left:345px;width:55px">1191</div>
<div class="c u" style="left:400px;width:215px">MAXIMINO ROBERTO</div>
<div class="c" style="left:615px;width:80px">Cliente</div>
<div class="c r_" style="left:695px;width:80px">0.00</div>
<div class="c r_" style="left:775px;width:80px">4,275.11</div>
<div class="c r_" style="left:855px;width:80px">0.00</div>
<div class="c r_" style="left:935px;width:100px">4,275.11</div>
<div class="c r_" style="left:1035px;width:40px">2</div>
<div class="c" style="left:1075px;width:100px">Ingreso</div>
</div>
<div class="r g" style="top:532px">
<div class="c" style="left:0px;width:30px"><div class="cb"></div></div>
<div class="c r_ id" style="left:30px;width:45px">35,703</div>
<div class="c f" style="left:75px;width:70px">16/12/2024</div>
<div class="c" style="left:145px;width:55px">Venta</div>
<div class="c" style="left:200px;width:55px">ODR</div>
<div class="c" style="left:255px;width:30px">7</div>
<div class="c" style="left:285px;width:60px">1016</div>
<div class="c" style="left:345px;width:55px">1</div>
<div class="c cf" style="left:400px;width:215px">Consumidor Final</div>
<div class="c" style="left:615px;width:80px">Ninguna</div>
<div class="c r_" style="left:695px;width:80px">0.00</div>
<div class="c r_" style="left:775px;width:80px">0.00</div>
<div class="c r_" style="left:855px;width:80px">0.00</div>
<div class="c r_" style="left:935px;width:100px">19,375.97</div>
<div class="c r_" style="left:1035px;width:40px">1</div>
<div class="c" style="left:1075px;width:100px">Ingreso</div>
</div>
<div class="r" style="top:554px">
<div class="c" style="left:0px;width:30px"><div class="cb"></div></div>
<div class="c r_ id" style="left:30px;width:45px">35,704</div>
<div class="c f" style="left:75px;width:70px">16/12/2024</div>
<div class="c" style="left:145px;width:55px">Venta</div>
<div class="c" style="left:200px;width:55px">FVB</div>
<div class="c" style="left:255px;width:30px">7</div>
<div class="c" style="left:285px;width:60px">804</div>
<div class="c" style="left:345px;width:55px">1</div>
<div class="c cf" style="left:400px;width:215px">Consumidor Final</div>
<div class="c" style="left:615px;width:80px">Ninguna</div>
<div class="c r_" style="left:695px;width:80px">0.00</div>
<div class="c r_" style="left:775px;width:80px">0.00</div>
<div class="c r_" style="left:855px;width:80px">0.00</div>
<div class="c r_" style="left:935px;width:100px">10,338.05</div>
<div class="c r_" style="left:1035px;width:40px">1</div>
<div class="c" style="left:1075px;width:100px">Ninguno</div>
</div>
<div class="r g" style="top:576px">
<div class="c" style="left:0px;width:30px"><div class="cb"></div></div>
<div class="c r_ id" style="left:30px;width:45px">35,705</div>
<div class="c f" style="left:75px;width:70px">16/12/2024</div>
<div class="c" style="left:145px;width:55px">Venta</div>
<div class="c" style="left:200px;width:55px">REMV</div>
<div class="c" style="left:255px;width:30px">7</div>
<div class="c" style="left:285px;width:60px">134</div>
<div class="c" style="left:345px;width:55px">14933</div>
<div class="c u" style="left:400px;width:215px">NUEVA EA S.R.L.</div>
<div class="c" style="left:615px;width:80px">Ninguna</div>
<div class="c r_" style="left:695px;width:80px">0.00</div>
<div class="c r_" style="left:775px;width:80px">0.00</div>
<div class="c r_" style="left:855px;width:80px">0.00</div>
<div class="c r_" style="left:935px;width:100px">130,499.55</div>
<div class="c r_" style="left:1035px;width:40px">2</div>
<div class="c" style="left:1075px;width:100px">Ninguno</div>
</div>
<div class="r" style="top:598px">
<div class="c" style="left:0px;width:30px"><div class="cb"></div></div>
<div class="c r_ id" style="left:30px;width:45px">35,706</div>
<div class="c f" style="left:75px;width:70px">16/12/2024</div>
<div class="c" style="left:145px;width:55px">Ingreso</div>
<div class="c" style="left:200px;width:55px">REC</div>
<div class="c" style="left:255px;width:30px">7</div>
<div class="c" style="left:285px;width:60px">516</div>
<div class="c" style="left:345px;width:55px">438</div>
<div class="c u" style="left:400px;width:215px">MINISTERIO DE CULTURA Y COMUNIC...</div>
<div class="c" style="left:615px;width:80px">Cliente</div>
<div class="c r_" style="left:695px;width:80px">0.00</div>
<div class="c r_" style="left:775px;width:80px">147,837.87</div>
<div class="c r_" style="left:855px;width:80px">0.00</div>
<div class="c r_" style="left:935px;width:100px">147,837.87</div>
<div class="c r_" style="left:1035px;width:40px">2</div>
<div class="c" style="left:1075px;width:100px">Ingreso</div>
</div>
<div class="r g" style="top:620px">
<div class="c" style="left:0px;width:30px"><div class="cb"></div></div>
<div class="c r_ id" style="left:30px;width:45px">35,707</div>
<div class="c f" style="left:75px;width:70px">16/12/2024</div>
<div class="c" style="left:145px;width:55px">Venta</div>
<div class="c" style="left:200px;width:55px">FVA</div>
<div class="c" style="left:255px;width:30px">7</div>
<div class="c" style="left:285px;width:60px">232</div>
<div class="c" style="left:345px;width:55px">4443</div>
<div class="c u" style="left:400px;width:215px">TABORDA WALTER</div>
<div class="c" style="left:615px;width:80px">Ninguna</div>
<div class="c r_" style="left:695px;width:80px">0.00</div>
<div class="c r_" style="left:775px;width:80px">0.00</div>
<div class="c r_" style="left:855px;width:80px">0.00</div>
<div class="c r_" style="left:935px;width:100px">11,160.00</div>
<div class="c r_" style="left:1035px;width:40px">1</div>
<div class="c" style="left:1075px;width:100px">Ninguno</div>
</div>
<div class="r" style="top:642px">
<div class="c" style="left:0px;width:30px"><div class="cb"></div></div>
<div class="c r_ id" style="left:30px;width:45px">35,708</div>
<div class="c f" style="left:75px;width:70px">16/12/2024</div>
<div class="c" style="left:145px;width:55px">Venta</div>
<div class="c" style="left:200px;width:55px">PRESB</div>
<div class="c" style="left:255px;width:30px">7</div>
<div class="c" style="left:285px;width:60px">326</div>
<div class="c" style="left:345px;width:55px">2361</div>
<div class="c u" style="left:400px;width:215px">LONDERO JAVIER</div>
<div class="c" style="left:615px;width:80px">Ninguna</div>
<div class="c r_" style="left:695px;width:80px">0.00</div>
<div class="c r_" style="left:775px;width:80px">0.00</div>
<div class="c r_" style="left:855px;width:80px">0.00</div>
<div class="c r_" style="left:935px;width:100px">422,315.70</div>
<div class="c r_" style="left:1035px;width:40px">2</div>
<div class="c" style="left:1075px;width:100px">Ninguno</div>
</div>
<div class="r g" style="top:664px">
<div class="c" style="left:0px;width:30px"><div class="cb"></div></div>
<div class="c r_ id" style="left:30px;width:45px">35,709</div>
<div class="c f" style="left:75px;width:70px">16/12/2024</div>
<div class="c" style="left:145px;width:55px">Venta</div>
<div class="c" style="left:200px;width:55px">FVA</div>
<div class="c" style="left:255px;width:30px">7</div>
<div class="c" style="left:285px;width:60px">233</div>
<div class="c" style="left:345px;width:55px">211</div>
<div class="c u" style="left:400px;width:215px">JOHNSON ACERO S. A. INDUSTRIAL Y...</div>
<div class="c" style="left:615px;width:80px">Cliente</div>
<div class="c r_" style="left:695px;width:80px">31,055.67</div>
<div class="c r_" style="left:775px;width:80px">0.00</div>
<div class="c r_" style="left:855px;width:80px">31,055.67</div>
<div class="c r_" style="left:935px;width:100px">31,055.67</div>
<div class="c r_" style="left:1035px;width:40px">2</div>
<div class="c" style="left:1075px;width:100px">Ninguno</div>
</div>
<div class="r" style="top:686px">
<div class="c" style="left:0px;width:30px"><div class="cb"></div></div>
<div class="c r_ id" style="left:30px;width:45px">35,710</div>
<div class="c f" style="left:75px;width:70px">16/12/2024</div>
<div class="c" style="left:145px;width:55px">Venta</div>
<div class="c" style="left:200px;width:55px">PRESB</div>
<div class="c" style="left:255px;width:30px">7</div>
<div class="c" style="left:285px;width:60px">327</div>
<div class="c" style="left:345px;width:55px">1</div>
<div class="c cf" style="left:400px;width:215px">Consumidor Final</div>
<div class="c" style="left:615px;width:80px">Ninguna</div>
<div class="c r_" style="left:695px;width:80px">0.00</div>
<div class="c r_" style="left:775px;width:80px">0.00</div>
<div class="c r_" style="left:855px;width:80px">0.00</div>
<div class="c r_" style="left:935px;width:100px">238,151.31</div>
<div class="c r_" style="left:1035px;width:40px">1</div>
<div class="c" style="left:1075px;width:100px">Ninguno</div>
</div>
<div class="r g" style="top:708px">
<div class="c" style="left:0px;width:30px"><div class="cb"></div></div>
<div class="c r_ id" style="left:30px;width:45px">35,711</div>
<div class="c f" style="left:75px;width:70px">16/12/2024</div>
<div class="c" style="left:145px;width:55px">Venta</div>
<div class="c" style="left:200px;width:55px">REMV</div>
<div class="c" style="left:255px;width:30px">7</div>
<div class="c" style="left:285px;width:60px">135</div>
<div class="c" style="left:345px;width:55px">211</div>
<div class="c u" style="left:400px;width:215px">JOHNSON ACERO S. A. INDUSTRIAL Y...</div>
<div class="c" style="left:615px;width:80px">Ninguna</div>
<div class="c r_" style="left:695px;width:80px">0.00</div>
<div class="c r_" style="left:775px;width:80px">0.00</div>
<div class="c r_" style="left:855px;width:80px">0.00</div>
<div class="c r_" style="left:935px;width:100px">31,055.67</div>
<div class="c r_" style="left:1035px;width:40px">2</div>
<div class="c" style="left:1075px;width:100px">Ninguno</div>
</div>
<div class="r" style="top:730px">
<div class="c" style="left:0px;width:30px"><div class="cb"></div></div>
<div class="c r_ id" style="left:30px;width:45px">35,712</div>
<div class="c f" style="left:75px;width:70px">16/12/2024</div>
<div class="c" style="left:145px;width:55px">Venta</div>
<div class="c" style="left:200px;width:55px">ODR</div>
<div class="c" style="left:255px;width:30px">7</div>
<div class="c" style="left:285px;width:60px">1017</div>
<div class="c" style="left:345px;width:55px">1</div>
<div class="c cf" style="left:400px;width:215px">Consumidor Final</div>
<div class="c" style="left:615px;width:80px">Ninguna</div>
<div class="c r_" style="left:695px;width:80px">0.00</div>
<div class="c r_" style="left:775px;width:80px">0.00</div>
<div class="c r_" style="left:855px;width:80px">0.00</div>
<div class="c r_" style="left:935px;width:100px">171,528.67</div>
<div class="c r_" style="left:1035px;width:40px">1</div>
<div class="c" style="left:1075px;width:100px">Ingreso</div>
</div>
<div class="r g" style="top:752px">
<div class="c" style="left:0px;width:30px"><div class="cb"></div></div>
<div class="c r_ id" style="left:30px;width:45px">35,713</div>
<div class="c f" style="left:75px;width:70px">16/12/2024</div>
<div class="c" style="left:145px;width:55px">Compra</div>
<div class="c" style="left:200px;width:55px">FCA</div>
<div class="c" style="left:255px;width:30px">10</div>
<div class="c" style="left:285px;width:60px">1322</div>
<div class="c" style="left:345px;width:55px">8</div>
<div class="c u1" style="left:400px;width:215px">DMD INTERNATIONAL TRADING SRL</div>
<div class="c" style="left:615px;width:80px">Proveedor</div>
<div class="c r_" style="left:695px;width:80px">0.00</div>
<div class="c r_" style="left:775px;width:80px">1,164,358.27</div>
<div class="c r_" style="left:855px;width:80px">-1,164,358.27</div>
<div class="c r_" style="left:935px;width:100px">1,164,358.27</div>
<div class="c r_" style="left:1035px;width:40px">2</div>
<div class="c" style="left:1075px;width:100px">Ninguno</div>
</div>
<div class="r" style="top:774px">
<div class="c" style="left:0px;width:30px"><div class="cb"></div></div>
<div class="c r_ id" style="left:30px;width:45px">35,714</div>
<div class="c f" style="left:75px;width:70px">16/12/2024</div>
<div class="c" style="left:145px;width:55px">Venta</div>
<div class="c" style="left:200px;width:55px">PRES</div>
<div class="c" style="left:255px;width:30px">7</div>
<div class="c" style="left:285px;width:60px">328</div>
<div class="c" style="left:345px;width:55px">14984</div>
<div class="c u" style="left:400px;width:215px">3D LATINOAMERICA S. A.</div>
<div class="c" style="left:615px;width:80px">Ninguna</div>
<div class="c r_" style="left:695px;width:80px">0.00</div>
<div class="c r_" style="left:775px;width:80px">0.00</div>
<div class="c r_" style="left:855px;width:80px">0.00</div>
<div class="c r_" style="left:935px;width:100px">5,098.94</div>
<div class="c r_" style="left:1035px;width:40px">2</div>
<div class="c" style="left:1075px;width:100px">Ninguno</div>
</div>
<div class="r g" style="top:796px">
<div class="c" style="left:0px;width:30px"><div class="cb"></div></div>
<div class="c r_ id" style="left:30px;width:45px">35,715</div>
<div class="c f" style="left:75px;width:70px">16/12/2024</div>
<div class="c" style="left:145px;width:55px">Venta</div>
<div class="c" style="left:200px;width:55px">ODR</div>
<div class="c" style="left:255px;width:30px">7</div>
<div class="c" style="left:285px;width:60px">1018</div>
<div class="c" style="left:345px;width:55px">1</div>
<div class="c cf" style="left:400px;width:215px">Consumidor Final</div>
<div class="c" style="left:615px;width:80px">Ninguna</div>
<div class="c r_" style="left:695px;width:80px">0.00</div>
<div class="c r_" style="left:775px;width:80px">0.00</div>
<div class="c r_" style="left:855px;width:80px">0.00</div>
<div class="c r_" style="left:935px;width:100px">18,364.77</div>
<div class="c r_" style="left:1035px;width:40px">1</div>
<div class="c" style="left:1075px;width:100px">Ingreso</div>
</div>
<div class="r" style="top:818px">
<div class="c" style="left:0px;width:30px"><div class="cb"></div></div>
<div class="c r_ id" style="left:30px;width:45px">35,716</div>
<div class="c f" style="left:75px;width:70px">16/12/2024</div>
<div class="c" style="left:145px;width:55px">Venta</div>
<div class="c" style="left:200px;width:55px">ODR</div>
<div class="c" style="left:255px;width:30px">7</div>
<div class="c" style="left:285px;width:60px">1019</div>
<div class="c" style="left:345px;width:55px">1</div>
<div class="c cf" style="left:400px;width:215px">Consumidor Final</div>
<div class="c" style="left:615px;width:80px">Ninguna</div>
<div class="c r_" style="left:695px;width:80px">0.00</div>
<div class="c r_" style="left:775px;width:80px">0.00</div>
<div class="c r_" style="left:855px;width:80px">0.00</div>
<div class="c r_" style="left:935px;width:100px">2,700.64</div>
<div class="c r_" style="left:1035px;width:40px">1</div>
<div class="c" style="left:1075px;width:100px">Ingreso</div>
</div>
<div class="t" style="left:604px;top:140px;letter-spacing:-.7px">SENADORE...</div>
<svg class="a" style="left:0;top:0" width="1273" height="886" viewBox="0 0 1273 886">
<polygon points="90,212.5 111,199 111,205 131,205 131,220.5 111,220.5 111,227" fill="#ed1c24" stroke="#ed1c24" stroke-width="2" stroke-linejoin="round"/>
<polygon points="91,236 112,225 112,231 128,231 128,243 112,243 112,245" fill="#ed1c24" stroke="#ed1c24" stroke-width="2" stroke-linejoin="round"/>
<polygon points="91,259 114,248 114,252 134,252 134,266 114,266 114,271" fill="#ed1c24" stroke="#ed1c24" stroke-width="2" stroke-linejoin="round"/>
<polygon points="93,301 116,289.5 116,295.5 137,295.5 137,308.5 116,308.5 116,315" fill="#ed1c24" stroke="#ed1c24" stroke-width="2" stroke-linejoin="round"/>
<polygon points="95,387.5 121,372 121,379 144,379 144,397 121,397 121,404" fill="#ed1c24" stroke="#ed1c24" stroke-width="2" stroke-linejoin="round"/>
</svg>
<div class="a" style="left:268px;top:59px;width:340px;height:272px;background:rgba(0,0,0,.5);filter:blur(1.600px)"></div>
<div class="a" style="left:264px;top:34px;width:29px;height:23px;background:#fff;border:1px solid #808080;border-bottom:none"></div>
<div class="a" style="left:264px;top:55px;width:341px;height:274px;background:#fff;border:1px solid #808080"></div>
<div class="a" style="left:265px;top:54px;width:27px;height:3px;background:#fff"></div>
<div class="a" style="left:266px;top:57px;width:24px;height:270px;background:linear-gradient(90deg,#fbfbfb,#f1f1f1)"></div>
<svg class="a" style="left:266px;top:37px" width="16" height="16" viewBox="0 0 16 16"><defs><linearGradient id="i4a" x1="0" y1="0" x2="0" y2="1"><stop offset="0" stop-color="#fafcff"/><stop offset="1" stop-color="#d5e0f0"/></linearGradient><radialGradient id="i4b" cx=".4" cy=".35" r=".7"><stop offset="0" stop-color="#fff"/><stop offset="1" stop-color="#cfe0f5"/></radialGradient></defs><path d="M0.500 2.500 H9.500 V14.500 H0.500 Z" fill="url(#i4a)" stroke="#6a7fa8" stroke-width=".9"/><path d="M0.500 14.700 H9.700 V9" stroke="#3f5a85" stroke-width="1" fill="none"/><path d="M2 4.500h3M2 6.500h2.500" stroke="#7f9ac8" stroke-width=".9"/><rect x="1.800" y="9" width="6.800" height="4.300" fill="#a9b1be"/><circle cx="8.600" cy="5" r="3.500" fill="url(#i4b)" stroke="#9097a3" stroke-width="1.100"/><path d="M11.300 7.700 L14.200 10.800" stroke="#e39a3c" stroke-width="2.600" stroke-linecap="round"/><path d="M11.300 7.700 L12.200 8.700" stroke="#c9c9c9" stroke-width="2.200"/></svg>
<svg class="a" style="left:284px;top:44px" width="5" height="3" viewBox="0 0 5 3"><path d="M0 0 H5 L2.500 3 Z" fill="#000"/></svg>
<div class="t ui mi" style="left:300px;top:61px;letter-spacing:0.09px">Reimprimir comprobante</div>
<div class="t ui mi" style="left:300px;top:83px;letter-spacing:0.05px">Convertir comprobante (primera opción) - F7</div>
<div class="t ui mi" style="left:300px;top:105px;letter-spacing:0.02px">Convertir comprobante (segunda opción) - F8</div>
<div class="t ui mi" style="left:300px;top:127px;letter-spacing:0.1px">Eliminar comprobante</div>
<div class="a" style="left:297px;top:148px;width:305px;height:1px;background:#d7d7d7"></div>
<div class="t ui mi" style="left:300px;top:155px;letter-spacing:0px">Reimprimir comprobantes marcados</div>
<div class="t ui mi" style="left:300px;top:177px;letter-spacing:-0.05px">Enviar por mail los comprobantes marcados</div>
<div class="t ui mi" style="left:300px;top:199px;letter-spacing:-0.22px">Generar PDFs de comprobantes marcados</div>
<div class="t ui mi" style="left:300px;top:221px;letter-spacing:-0.1px">Rearmar asiento contable de comp. marcados</div>
<div class="t ui mi" style="left:300px;top:243px;letter-spacing:-0.1px">Rearmar descripción desde items comp. marcados</div>
<div class="t ui mi" style="left:300px;top:265px;letter-spacing:-0.13px">Recalcular saldos de comprobantes marcados</div>
<div class="t ui mi" style="left:300px;top:287px;letter-spacing:-0.08px">Asignar producto a entidades marcadas</div>
<div class="t ui mi" style="left:300px;top:309px;letter-spacing:-0.03px">Eliminar comprobantes marcados</div>
<div class="t" style="left:70px;top:855px">Seleccionadas:</div>
<div class="a" style="left:146px;top:853px;width:27px;height:19px;background:#f0f0f0;border-top:1px solid #a0a0a0;border-left:1px solid #a0a0a0"></div>
<div class="t" style="left:160px;top:855px;font-size:12px">5</div>
<div class="a" style="left:175px;top:852px;width:21px;height:21px;background:#e3e3e3;border:1px solid #adadad"></div>
<div class="a" style="left:179px;top:856px;width:13px;height:13px;background:linear-gradient(135deg,#c9cff2,#f4f5ff 70%);border:1px solid #4a4a6a"></div>
<svg class="a" style="left:180px;top:857px" width="11" height="11" viewBox="0 0 11 11"><path d="M1.500 5.300 L4.300 8.300 L9.600 2.200" stroke="#3a3a3a" stroke-width="1.400" fill="none"/></svg>
<div class="a" style="left:197px;top:852px;width:21px;height:21px;background:#e1e1e1;border:1px solid #adadad"></div>
<div class="a" style="left:201px;top:856px;width:13px;height:13px;background:#fff;border:1px solid #8a8a8a;border-top:2px solid #3a3a3a;border-left:2px solid #3a3a3a"></div>
<div class="t" style="left:244px;top:855px">Marcar:</div>
<div class="a" style="left:283px;top:853px;width:41px;height:20px;background:#fff;border:1px solid #7a7a7a"></div>
<div class="t" style="left:294px;top:855px;font-size:12px">10</div>
<svg class="a" style="left:309px;top:855px" width="14" height="16" viewBox="0 0 14 16"><rect width="14" height="16" fill="#f0f0f0"/><path d="M0 8H14" stroke="#d5d5d5"/><path d="M3.5 6 L7 2.5 L10.5 6 Z M3.5 10 L7 13.5 L10.5 10 Z" fill="#222"/></svg>
<div class="a" style="left:327px;top:852px;width:20px;height:21px;background:#e1e1e1;border:1px solid #adadad"></div>
<div class="a" style="left:330px;top:856px;width:13px;height:13px;background:linear-gradient(135deg,#c9cff2,#f4f5ff 70%);border:1px solid #4a4a6a"></div>
<svg class="a" style="left:331px;top:857px" width="11" height="11" viewBox="0 0 11 11"><path d="M1.500 5.300 L4.300 8.300 L9.600 2.200" stroke="#3a3a3a" stroke-width="1.400" fill="none"/></svg>
<div class="t" style="left:379px;top:855px">Neto:</div>
<div class="a" style="left:409px;top:853px;width:97px;height:19px;background:#f0f0f0;border-top:1px solid #8c8c8c;border-left:1px solid #8c8c8c"></div>
<div class="t" style="left:409px;top:855px;width:93px;text-align:right;font-size:12px">914,162.43</div>
<div class="t" style="left:509px;top:855px;font-size:12px">$</div>
<div class="t" style="left:550px;top:855px">Final:</div>
<div class="a" style="left:578px;top:852px;width:97px;height:19px;background:#f0f0f0;border-top:1px solid #8c8c8c;border-left:1px solid #8c8c8c"></div>
<div class="t" style="left:578px;top:854px;width:93px;text-align:right;font-size:12px">1,031,314.25</div>
<div class="t" style="left:678px;top:854px;font-size:12px">$</div>
<div class="a" style="left:1033px;top:851px;width:125px;height:21px;background:#f4f4fc;border:1px solid #adadad;box-shadow:inset 0 0 0 1.500px #dedede"></div>
<svg class="a" style="left:1037px;top:855px" width="15" height="12" viewBox="0 0 15 12"><defs><linearGradient id="fb" x1="0" y1="0" x2="1" y2=".6"><stop offset="0" stop-color="#fff"/><stop offset=".42" stop-color="#f4f4f4"/><stop offset=".7" stop-color="#8a8a8a"/><stop offset="1" stop-color="#222"/></linearGradient></defs><path d="M0.600 0.800 H14.400 L9.300 6.200 V11.300 H5.700 V6.200 Z" fill="url(#fb)" stroke="#2a2a2a" stroke-width="1.100" stroke-linejoin="round"/></svg>
<div class="t" style="left:1055px;top:854px;letter-spacing:-.55px">Filtrar seleccionados</div>
<div class="a" style="left:1164px;top:851px;width:90px;height:21px;background:#f8f8ff;border:1px solid #b4b4b4;box-shadow:inset 0 0 0 1.700px #cacaca"></div>
<svg class="a" style="left:1169px;top:854px" width="11" height="14" viewBox="0 0 11 14"><defs><linearGradient id="dg" x1="0" y1="0" x2="1" y2="1"><stop offset="0" stop-color="#f2f2f2"/><stop offset="1" stop-color="#bdbdbd"/></linearGradient></defs><path d="M0.500 0.500 H7.500 L10.500 3.500 V13.500 H0.500 Z" fill="url(#dg)" stroke="#9c9c9c" stroke-width=".9"/><path d="M3 6.500 A2.600 2.600 0 0 1 7.800 5.400 M8 8 A2.600 2.600 0 0 1 3.200 9.200" stroke="#8a8a8a" stroke-width="1" fill="none"/></svg>
<div class="t" style="left:1187px;top:854px;color:#0000c8;letter-spacing:-.7px">Limpiar filtros</div>
<div class="t" style="left:1194px;top:866px;font-size:21px;line-height:24px;height:24px;color:rgba(173,173,173,.79);letter-spacing:.5px">Activar Wi</div>
<svg class="a" style="left:0;top:0" width="1273" height="886" viewBox="0 0 1273 886" fill="none" stroke="#ed1c24">
<rect x="256.5" y="23.5" width="39.5" height="33.5" rx="7" ry="7" stroke-width="5"/>
<rect x="287" y="303" width="199.500" height="35.500" rx="9" ry="9" stroke-width="4.500"/>
<rect x="56" y="842.500" width="180.500" height="38" rx="13" ry="13" stroke-width="7.500"/>
</svg>
</body></html>
